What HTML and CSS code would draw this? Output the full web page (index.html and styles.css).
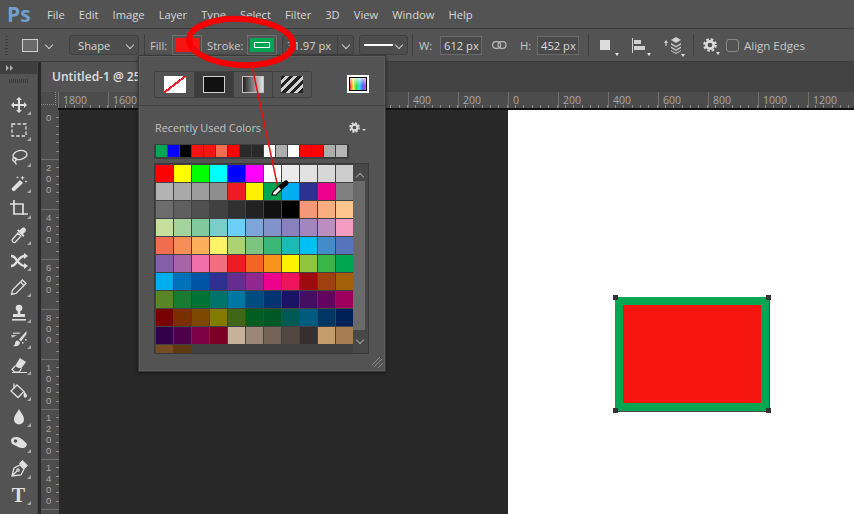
FILE: index.html
```html
<!DOCTYPE html>
<html lang="en">
<head>
    <meta charset="UTF-8">
    <meta name="viewport" content="width=device-width, initial-scale=1.0">
    <title>Photoshop - Stroke Swatches</title>
    <link rel="stylesheet" href="styles.css">
</head>
<body>

    <svg class="defs" width="0" height="0">
        <symbol id="gear" viewBox="0 0 16 16">
            <circle cx="8" cy="8" r="4.2" fill="none" stroke="currentColor" stroke-width="3"/>
            <circle cx="8" cy="8" r="6.6" fill="none" stroke="currentColor" stroke-width="2.4" stroke-dasharray="3 2.18"/>
        </symbol>
    </svg>

    <!-- Menu bar -->
    <div class="menubar">
        <div class="logo">Ps</div>
        <div class="menu-items">
            <span>File</span><span>Edit</span><span>Image</span><span>Layer</span><span>Type</span><span>Select</span>
            <span>Filter</span><span>3D</span><span>View</span><span>Window</span><span>Help</span>
        </div>
    </div>

    <!-- Options bar -->
    <div class="optionsbar">
        <div class="grip"></div>
        <div class="shape-preset"></div>
        <div class="chev preset-chev"></div>
        <div class="dropdown shape-mode">Shape<span class="chev"></span></div>
        <div class="sep"></div>
        <span class="lbl fill-lbl">Fill:</span>
        <div class="swatch-btn fill-btn"></div>
        <span class="lbl stroke-lbl">Stroke:</span>
        <div class="swatch-btn stroke-btn"><span></span></div>
        <div class="dropdown stroke-width">31.97 px<span class="chev-cell"><span class="chev"></span></span></div>
        <div class="dropdown line-style"><span class="line"></span><span class="chev"></span></div>
        <div class="sep sep-a"></div>
        <span class="lbl w-lbl">W:</span>
        <div class="num-input">612 px</div>
        <svg class="link-icon" width="15" height="8" viewBox="0 0 15 8" fill="none" stroke="#b8b8b8" stroke-width="1.2">
            <rect x="0.6" y="0.6" width="8" height="6.8" rx="3.4"/>
            <rect x="6" y="0.6" width="8" height="6.8" rx="3.4"/>
        </svg>
        <span class="lbl h-lbl">H:</span>
        <div class="num-input">452 px</div>
        <div class="sep sep-b"></div>
        <div class="opt-icon op-square"><span></span></div>
        <div class="opt-icon op-align">
            <svg width="14" height="15" viewBox="0 0 14 15" fill="#d0d0d0"><rect width="1" height="15"/><rect x="2" y="2" width="7" height="4"/><rect x="2" y="8" width="11" height="4"/></svg>
        </div>
        <div class="opt-icon op-layers">
            <svg width="20" height="18" viewBox="0 0 20 18" fill="#d0d0d0">
                <path d="M2 7l2-3 2 3H4.600v3H3.400V7z"/>
                <path d="M14 1l5 3-5 3-5-3z"/>
                <path d="M9 7l5 3 5-3v1.500l-5 3-5-3zM9 10.500l5 3 5-3V12l-5 3-5-3zM9 14l4 2.500h2l4-2.500v1l-5 3-5-3z"/>
            </svg>
        </div>
        <div class="sep sep-c"></div>
        <div class="opt-icon op-gear"><svg width="14" height="14"><use href="#gear"/></svg></div>
        <div class="checkbox"></div>
        <span class="lbl align-lbl">Align Edges</span>
    </div>

    <div class="workspace">

        <!-- Tools panel -->
        <div class="tools">
            <div class="tools-head">
                <svg width="8" height="6" viewBox="0 0 8 6" fill="#b0b0b0"><path d="M0 0l3 3-3 3zM4 0l3 3-3 3z"/></svg>
            </div>
            <div class="tools-grip"></div>
            <div class="tool">
                <svg viewBox="0 0 18 18" fill="#e0e0e0"><path d="M9 1l3 3h-2v4h4V6l3 3-3 3v-2h-4v4h2l-3 3-3-3h2v-4H4v2L1 9l3-3v2h4V4H6z"/></svg>
            </div>
            <div class="tool">
                <svg viewBox="0 0 18 18" fill="none" stroke="#e0e0e0" stroke-width="1.300"><rect x="2" y="2" width="14" height="12" stroke-dasharray="3.400 2"/></svg>
            </div>
            <div class="tool">
                <svg viewBox="0 0 18 18" fill="none" stroke="#e0e0e0" stroke-width="1.300"><ellipse cx="10" cy="7" rx="7" ry="4.500" transform="rotate(-12 10 7)"/><circle cx="4.500" cy="11.500" r="1.800"/><path d="M4.500 13c.5 1.500 1 2.500 2 3.500"/></svg>
            </div>
            <div class="tool">
                <svg viewBox="0 0 18 18" fill="#e0e0e0"><path d="M10 6l3 3-8.500 8c-1 .7-3.500-1.500-2.700-2.800z"/><path d="M12.500 1.500l.6 1.700 1.700.6-1.700.6-.6 1.700-.6-1.700-1.700-.6 1.700-.6zM16 6l.4 1.200 1.200.4-1.200.4-.4 1.200-.4-1.200-1.200-.4 1.200-.4zM7.500 2l.4 1 1 .4-1 .4-.4 1-.4-1-1-.4 1-.4z"/></svg>
            </div>
            <div class="tool">
                <svg viewBox="0 0 18 18" fill="none" stroke="#e0e0e0" stroke-width="1.700"><path d="M0 4h13v11M4 0v14h14"/></svg>
            </div>
            <div class="tool">
                <svg viewBox="0 0 18 18"><path d="M8 7l3 3-6 6.500c-1 .8-3.500-1.500-2.800-2.800z" fill="none" stroke="#e0e0e0" stroke-width="1.300"/><path d="M7 4.500l6.500 6.500 1-1.500-1.500-1.500 2.500-2.500c1.500-2.500-1.500-5-3.500-3.500L9.500 4.500 8.500 3.300z" fill="#e0e0e0"/></svg>
            </div>
            <div class="tool">
                <svg viewBox="0 0 18 18" fill="none" stroke="#e0e0e0" stroke-width="2.400"><path d="M1 4c4 0 4 2 6 4.500S11 14 15 14M1 14c4 0 4-2 6-4.500S11 4 15 4"/><path d="M14 1l4 3-4 3zM14 11l4 3-4 3z" fill="#e0e0e0" stroke="none"/></svg>
            </div>
            <div class="tool">
                <svg viewBox="0 0 18 18" fill="none" stroke="#e0e0e0" stroke-width="1.300"><path d="M12.500 2l3.500 3.500L6 15.500l-4.500 1 1-4.500zM10.500 4l3.500 3.500"/></svg>
            </div>
            <div class="tool">
                <svg viewBox="0 0 18 18" fill="#e0e0e0"><circle cx="9" cy="4" r="3.300"/><rect x="7.700" y="6" width="2.600" height="4"/><path d="M3 10h12v3H3z"/><rect x="2" y="15" width="14" height="1.600"/></svg>
            </div>
            <div class="tool">
                <svg viewBox="0 0 18 18" fill="#e0e0e0"><path d="M16.500 1L9 9.500l2 2 5.500-7.500z"/><path d="M8 10.500l2 2c0 3-3.500 4.500-7 3.500 2-.8 2-2 2.200-3.500.3-1.500 1.600-2.200 2.800-2z"/><path d="M1 5h6L2 8zM3 2.500h8l-2 1.500H3z" opacity=".75"/><rect x="12" y="12" width="1.500" height="1.500"/><rect x="15" y="9" width="1.500" height="1.500"/></svg>
            </div>
            <div class="tool">
                <svg viewBox="0 0 18 18"><path d="M10 2l6 4-4.500 6-3 .1L5 10z" fill="#e0e0e0"/><path d="M5 10l-3 3.500 2.500 2.500h5l2-4" fill="none" stroke="#e0e0e0" stroke-width="1.200"/><rect x="2" y="16" width="15" height="1" fill="#e0e0e0"/></svg>
            </div>
            <div class="tool">
                <svg viewBox="0 0 18 18"><path d="M7 3l7 6.500-6 6L1 9z" fill="none" stroke="#e0e0e0" stroke-width="1.300"/><path d="M4 1.500v5" stroke="#e0e0e0" stroke-width="1.300"/><path d="M14 9.500c2 1.500 3 3 3 4.500a1.700 1.700 0 0 1-3.400 0c0-1 .3-2 .4-4.500z" fill="#e0e0e0"/></svg>
            </div>
            <div class="tool">
                <svg viewBox="0 0 18 18" fill="#e0e0e0"><path d="M9 1c2 4 5 6.500 5 10.500a5 5 0 0 1-10 0C4 7.500 7 5 9 1z"/></svg>
            </div>
            <div class="tool">
                <svg viewBox="0 0 18 18"><path d="M1 6c0-2 3-3.500 6-3 4 .6 6 3 10 7-1 3.500-3 4.500-5.500 4C8 13.500 7 12 4 11 2 10.500 1 8.500 1 6z" fill="#e0e0e0"/><circle cx="5.500" cy="7" r="1.800" fill="#535353"/></svg>
            </div>
            <div class="tool">
                <svg viewBox="0 0 18 18" fill="none" stroke="#e0e0e0" stroke-width="1.300"><path d="M2 16l2-8 6-3 4 4-3 6zM2 16l5-5"/><circle cx="8" cy="10" r="1.200"/><path d="M10 3.500L12.500 1 17 5.500 14.500 8z" fill="#e0e0e0"/></svg>
            </div>
            <div class="tool tool-text"><span>T</span></div>
            <div class="tool">
                <svg viewBox="0 0 18 18" fill="#e0e0e0"><path d="M6 2l9 7-4 1 3 6-2 1-3-6-3 3z"/></svg>
            </div>
        </div>

        <div class="document-area">
            <div class="tabs">
                <div class="tab">Untitled-1 @ 25% (Rectangle 1, RGB/8) *</div>
            </div>

            <!-- Horizontal ruler -->
            <div class="h-ruler">
                <div class="ruler-corner"></div>
                <div class="h-marks">
                    <span>1800</span><span>1600</span><span>1400</span><span>1200</span><span>1000</span><span>800</span><span>600</span><span>400</span>
                    <span>200</span><span>0</span><span>200</span><span>400</span><span>600</span><span>800</span><span>1000</span><span>1200</span>
                </div>
            </div>

            <div class="canvas-row">
                <!-- Vertical ruler -->
                <div class="v-ruler">
                    <span>0</span><span>2<br>0<br>0</span><span>4<br>0<br>0</span><span>6<br>0<br>0</span>
                    <span>8<br>0<br>0</span><span>1<br>0<br>0<br>0</span><span>1<br>2<br>0<br>0</span><span>1<br>4<br>0<br>0</span>
                </div>
                <div class="pasteboard">
                    <div class="artboard">
                        <div class="rect-shape">
                            <i class="handle tl"></i><i class="handle tr"></i><i class="handle bl"></i><i class="handle br"></i>
                        </div>
                    </div>
                </div>
            </div>
        </div>
    </div>

    <!-- Stroke swatches popup -->
    <div class="popup">
        <div class="popup-top">
            <div class="type-group">
                <div class="type-btn"><span class="ico ico-none"></span></div>
                <div class="type-btn active"><span class="ico ico-solid"></span></div>
                <div class="type-btn"><span class="ico ico-gradient"></span></div>
                <div class="type-btn"><span class="ico ico-pattern"></span></div>
            </div>
            <div class="picker"><span></span></div>
        </div>
        <div class="popup-body">
            <div class="recent-head">
                <span>Recently Used Colors</span>
                <svg class="recent-gear" width="11" height="11"><use href="#gear"/></svg>
                <i class="mini-tri"></i>
            </div>
            <div class="recent-row">
                <i style="background:#00a651"></i><i style="background:#0000ff"></i><i style="background:#000000"></i><i style="background:#f5140f"></i>
                <i style="background:#f5140f"></i><i style="background:#f26c4f"></i><i style="background:#ff0000"></i><i style="background:#2a2a2a"></i>
                <i style="background:#2a2a2a"></i><i style="background:#ffffff"></i><i style="background:#adadad"></i><i style="background:#ffffff"></i>
                <i style="background:#ff0000"></i><i style="background:#ff0000"></i><i style="background:#adadad"></i><i style="background:#b5b5b5"></i>
            </div>
            <div class="swatch-box">
                <div class="swatches">
                    <i style="background:#ff0000"></i><i style="background:#ffff00"></i><i style="background:#00ff00"></i><i style="background:#00ffff"></i><i style="background:#0000ff"></i><i style="background:#ff00ff"></i><i style="background:#ffffff"></i><i style="background:#ebebeb"></i><i style="background:#e1e1e1"></i><i style="background:#d7d7d7"></i><i style="background:#cccccc"></i>
                    <i style="background:#b3b3b3"></i><i style="background:#a9a9a9"></i><i style="background:#9c9c9c"></i><i style="background:#8e8e8e"></i><i style="background:#ed1c24"></i><i style="background:#fff200"></i><i style="background:#00a651"></i><i style="background:#00aeef"></i><i style="background:#2e3192"></i><i style="background:#ec008c"></i><i style="background:#808080"></i>
                    <i style="background:#6d6d6d"></i><i style="background:#5f5f5f"></i><i style="background:#505050"></i><i style="background:#414141"></i><i style="background:#303030"></i><i style="background:#222222"></i><i style="background:#111111"></i><i style="background:#000000"></i><i style="background:#f7977a"></i><i style="background:#fbad82"></i><i style="background:#fdc68c"></i>
                    <i style="background:#c6df9c"></i><i style="background:#a4d49d"></i><i style="background:#81ca9d"></i><i style="background:#7bcdc9"></i><i style="background:#6ccff7"></i><i style="background:#7ca6d8"></i><i style="background:#8293ca"></i><i style="background:#8881be"></i><i style="background:#a286bd"></i><i style="background:#bc8dbf"></i><i style="background:#f49bc1"></i>
                    <i style="background:#f26c4f"></i><i style="background:#f68e55"></i><i style="background:#fbaf5a"></i><i style="background:#fff467"></i><i style="background:#acd372"></i><i style="background:#7cc47f"></i><i style="background:#3bb878"></i><i style="background:#1abbb4"></i><i style="background:#00bff3"></i><i style="background:#438cca"></i><i style="background:#5574b9"></i>
                    <i style="background:#8560a8"></i><i style="background:#a864a8"></i><i style="background:#f06eaa"></i><i style="background:#f26d7d"></i><i style="background:#ed1c24"></i><i style="background:#f26522"></i><i style="background:#f7941d"></i><i style="background:#fff200"></i><i style="background:#8fc63d"></i><i style="background:#39b54a"></i><i style="background:#00a651"></i>
                    <i style="background:#00aeef"></i><i style="background:#0072bc"></i><i style="background:#0054a6"></i><i style="background:#2e3192"></i><i style="background:#662d91"></i><i style="background:#92278f"></i><i style="background:#ec008c"></i><i style="background:#ed145b"></i><i style="background:#9e0b0f"></i><i style="background:#a0410d"></i><i style="background:#a36209"></i>
                    <i style="background:#598527"></i><i style="background:#197b30"></i><i style="background:#007236"></i><i style="background:#00746b"></i><i style="background:#0076a3"></i><i style="background:#004b80"></i><i style="background:#003471"></i><i style="background:#1b1464"></i><i style="background:#440e62"></i><i style="background:#630460"></i><i style="background:#9e005d"></i>
                    <i style="background:#790000"></i><i style="background:#7b2e00"></i><i style="background:#7d4900"></i><i style="background:#827b00"></i><i style="background:#406618"></i><i style="background:#005e20"></i><i style="background:#005826"></i><i style="background:#005952"></i><i style="background:#005b7f"></i><i style="background:#003663"></i><i style="background:#002157"></i>
                    <i style="background:#32004b"></i><i style="background:#4b0049"></i><i style="background:#7b0046"></i><i style="background:#7a0026"></i><i style="background:#c7b299"></i><i style="background:#998675"></i><i style="background:#736357"></i><i style="background:#534741"></i><i style="background:#362f2d"></i><i style="background:#c69c6d"></i><i style="background:#a67c52"></i>
                    <i style="background:#754c24"></i><i style="background:#603913"></i>
                </div>
                <div class="scrollbar">
                    <div class="scroll-arrow up"></div>
                    <div class="scroll-thumb"></div>
                    <div class="scroll-arrow down"></div>
                </div>
            </div>
        </div>
        <svg class="resize-grip" width="11" height="11" viewBox="0 0 11 11" stroke="#8a8a8a" stroke-width="1">
            <path d="M0 8l8-8M2 10l8-8M6 11l5-5"/>
        </svg>
    </div>

    <!-- Red annotation over the screenshot -->
    <svg class="annotation" width="854" height="514" viewBox="0 0 854 514">
        <ellipse cx="241" cy="42" rx="52" ry="23" fill="none" stroke="#f80000" stroke-width="6" transform="rotate(3 241 42)"/>
        <line x1="252" y1="66" x2="278" y2="188" stroke="#e81010" stroke-width="1.500"/>
        <path d="M272 195l1-3 7-7 3 3-7 7z" fill="#fff" stroke="#000" stroke-width="1.200"/>
        <line x1="281.500" y1="186.500" x2="286" y2="183" stroke="#000" stroke-width="5" stroke-linecap="round"/>
    </svg>

</body>
</html>
```

FILE: styles.css
```css
* {
    box-sizing: border-box;
}

html, body {
    margin: 0;
    padding: 0;
}

body {
    position: relative;
    width: 854px;
    height: 514px;
    overflow: hidden;
    background: #282828;
    color: #d4d4d4;
    font-family: "Open Sans", Arial, sans-serif;
    font-size: 11.2px;
}

.defs {
    position: absolute;
}

/* menu bar */
.menubar {
    display: flex;
    align-items: center;
    height: 29px;
    background: #535353;
    border-bottom: 1px solid #3a3a3a;
}

.logo {
    width: 47px;
    padding-left: 7px;
    color: #6f9fca;
    font-family: "Open Sans", sans-serif;
    font-size: 21px;
    font-weight: 700;
    line-height: 28px;
}

.menu-items {
    display: flex;
    gap: 14px;
    color: #d6d6d6;
}

/* options bar */
.optionsbar {
    display: flex;
    align-items: center;
    height: 33px;
    background: #535353;
    border-bottom: 1px solid #3c3c3c;
}

.grip {
    width: 3px;
    height: 19px;
    margin-left: 5px;
    background: repeating-linear-gradient(#3a3a3a 0 1px, transparent 1px 3px);
}

.shape-preset {
    width: 16px;
    height: 13px;
    margin-left: 14px;
    background: #6a6a6a;
    border: 1px solid #d0d0d0;
}

.chev {
    display: inline-block;
    width: 6px;
    height: 6px;
    border-right: 1px solid #c8c8c8;
    border-bottom: 1px solid #c8c8c8;
    transform: rotate(45deg);
}

.preset-chev {
    margin-left: 8px;
}

.dropdown {
    display: flex;
    align-items: center;
    height: 20px;
    border: 1px solid #404040;
    border-radius: 3px;
    background: #4d4d4d;
}

.shape-mode {
    justify-content: space-between;
    width: 70px;
    margin-left: 17px;
    padding: 0 5px 0 8px;
}

.sep {
    width: 1px;
    height: 22px;
    margin-left: 5px;
    background: #3e3e3e;
}

.lbl {
    color: #c8c8c8;
}

.fill-lbl {
    width: 17px;
    margin-left: 5px;
    white-space: nowrap;
}

.swatch-btn {
    display: flex;
    align-items: center;
    justify-content: center;
    width: 30px;
    height: 20px;
    border: 1px solid #6e6e6e;
    padding: 2px;
    background-clip: content-box;
}

.fill-btn {
    margin-left: 5px;
    background-color: #f5140f;
}

.stroke-lbl {
    width: 37px;
    margin-left: 5px;
    white-space: nowrap;
}

.stroke-btn {
    margin-left: 3px;
    background-color: #00a651;
}

.stroke-btn span {
    display: block;
    width: 16px;
    height: 6px;
    border: 1px solid #fff;
    background: #00a651;
}

.stroke-width {
    width: 72px;
    margin-left: 5px;
    padding-left: 4px;
    justify-content: space-between;
}

.chev-cell {
    display: flex;
    align-items: center;
    justify-content: center;
    width: 16px;
    height: 18px;
    border-left: 1px solid #404040;
}

.line-style {
    justify-content: space-between;
    width: 49px;
    margin-left: 5px;
    padding: 0 5px 0 4px;
}

.line {
    width: 29px;
    height: 2px;
    background: #fff;
}

.sep-a {
    margin-left: 4px;
}

.w-lbl {
    width: 14px;
    margin-left: 6px;
    white-space: nowrap;
}

.num-input {
    width: 42px;
    height: 19px;
    margin-left: 7px;
    padding-left: 3px;
    border: 1px solid #6a6a6a;
    background: #4a4a4a;
    color: #dcdcdc;
    line-height: 17px;
}

.link-icon {
    margin-left: 10px;
}

.h-lbl {
    width: 10px;
    margin-left: 13px;
    white-space: nowrap;
}

.sep-b {
    margin-left: 9px;
}

.opt-icon {
    position: relative;
    display: flex;
    align-items: center;
}

.opt-icon::after {
    content: "";
    position: absolute;
    right: -3px;
    bottom: -3px;
    border: 2px solid transparent;
    border-top: 3px solid #e0e0e0;
    border-bottom: 0;
}

.op-square {
    width: 16px;
    height: 16px;
    margin-left: 11px;
}

.op-square span {
    width: 10px;
    height: 10px;
    background: #dcdcdc;
}

.op-align {
    width: 16px;
    margin-left: 16px;
}

.op-layers {
    width: 20px;
    margin-left: 14px;
}

.sep-c {
    margin-left: 11px;
}

.op-gear {
    width: 14px;
    margin-left: 9px;
    color: #dcdcdc;
}

.checkbox {
    width: 13px;
    height: 13px;
    margin-left: 9px;
    border: 1px solid #8a8a8a;
    border-radius: 3px;
}

.align-lbl {
    margin-left: 5px;
    font-size: 11.5px;
}

/* workspace */
.workspace {
    display: flex;
    height: 452px;
    overflow: hidden;
}

.tools {
    flex: none;
    width: 38px;
    background: #535353;
    border-right: 1px solid #474747;
}

.tools-head {
    display: flex;
    align-items: center;
    height: 12px;
    padding-left: 6px;
    background: #3e3e3e;
}

.tools-grip {
    width: 20px;
    height: 4px;
    margin: 5px auto 9px;
    background: repeating-linear-gradient(90deg, #3a3a3a 0 1px, transparent 1px 2px);
}

.tool {
    position: relative;
    display: flex;
    justify-content: center;
    align-items: center;
    height: 26px;
}

.tool svg {
    width: 18px;
    height: 18px;
}

.tool::after {
    content: "";
    position: absolute;
    right: 6px;
    bottom: 3px;
    border-left: 4px solid transparent;
    border-bottom: 4px solid #a8a8a8;
}

.tool-text span {
    color: #e0e0e0;
    font-family: "Liberation Serif", serif;
    font-size: 20px;
    font-weight: 700;
    line-height: 26px;
}

.document-area {
    flex: 1;
    margin-left: 3px;
    display: flex;
    flex-direction: column;
    min-width: 0;
}

.tabs {
    height: 30px;
    background: #424242;
    overflow: hidden;
}

.tab {
    width: 300px;
    height: 30px;
    padding-left: 11px;
    background: #535353;
    color: #e0e0e0;
    font-weight: 600;
    font-size: 12px;
    line-height: 29px;
    white-space: nowrap;
}

.h-ruler {
    display: flex;
    height: 18px;
    background: #4c4c4c;
}

.ruler-corner {
    flex: none;
    width: 15px;
    height: 13px;
    margin-right: 2px;
    border-right: 1px dotted #8a8a8a;
    border-bottom: 1px dotted #8a8a8a;
}

.h-marks {
    display: flex;
    flex: none;
    border-bottom: 2px solid #111;
    background: repeating-linear-gradient(90deg, transparent 0 7.33px, #8a8a8a 7.33px 8.33px) left bottom / 100% 3px no-repeat;
}

.h-marks span {
    flex: none;
    width: 50px;
    padding-left: 4px;
    border-left: 1px solid #6f6f6f;
    color: #a8a8a8;
    font-size: 10.5px;
    line-height: 16px;
}

.canvas-row {
    display: flex;
    height: 404px;
}

.v-ruler {
    flex: none;
    display: flex;
    flex-direction: column;
    width: 18px;
    background: #4c4c4c repeating-linear-gradient(transparent 0 7.33px, #8a8a8a 7.33px 8.33px) right top / 3px 100% no-repeat;
}

.v-ruler span {
    flex: none;
    height: 50px;
    padding: 2px 0 0 5px;
    border-bottom: 1px solid #6f6f6f;
    color: #a8a8a8;
    font-family: "Liberation Sans", Arial, sans-serif;
    font-size: 9.5px;
    line-height: 11px;
}

.pasteboard {
    flex: 1;
    padding-left: 449px;
    background: #282828;
}

.artboard {
    position: relative;
    height: 100%;
    background: #fff;
}

.rect-shape {
    position: absolute;
    left: 107px;
    top: 187px;
    width: 154px;
    height: 114px;
    background: #f5140f;
    border: 8px solid #00a651;
    box-shadow: 1px 1px 0 #4a4a4a;
}

.handle {
    position: absolute;
    width: 5px;
    height: 5px;
    background: #333;
}

.tl { left: -10px; top: -10px; }
.tr { right: -10px; top: -10px; }
.bl { left: -10px; bottom: -10px; }
.br { right: -10px; bottom: -10px; }

/* stroke popup */
.popup {
    position: absolute;
    left: 138px;
    top: 55px;
    width: 248px;
    height: 317px;
    background: #535353;
    border: 1px solid #3a3a3a;
    box-shadow: 0 1px 3px rgba(0, 0, 0, 0.5), inset 0 0 0 1px #5c5c5c;
}

.popup-top {
    display: flex;
    justify-content: space-between;
    align-items: center;
    height: 50px;
    padding: 7px 16px 0 15px;
    border-bottom: 1px solid #414141;
}

.type-group {
    display: flex;
    border: 1px solid #404040;
    border-radius: 2px;
}

.type-btn {
    display: flex;
    align-items: center;
    justify-content: center;
    width: 39px;
    height: 25px;
    border-left: 1px solid #404040;
}

.type-btn:first-child {
    border-left: 0;
}

.type-btn.active {
    background: #3c3c3c;
}

.ico {
    display: block;
    width: 22px;
    height: 17px;
}

.ico-none {
    background: linear-gradient(to top left, #fff 47%, #e81c24 47% 55%, #fff 55%);
}

.ico-solid {
    background: #111;
    border: 1px solid #d0d0d0;
}

.ico-gradient {
    background: linear-gradient(90deg, #222, #e4e4e4);
    border: 1px solid #c0c0c0;
}

.ico-pattern {
    background: repeating-linear-gradient(135deg, #222 0 3px, #d0d0d0 3px 6px);
}

.picker {
    width: 22px;
    height: 18px;
    padding: 2px;
    background: #fff;
}

.picker span {
    display: block;
    height: 100%;
    border: 1px solid #000;
    background:
        linear-gradient(rgba(255, 255, 255, 0.7), rgba(255, 255, 255, 0) 60%),
        linear-gradient(90deg, #ff3030, #f6f04a, #38e05a, #38d8f0, #5060f0, #f040d0);
}

.popup-body {
    padding: 13px 0 0 15px;
}

.recent-head {
    display: flex;
    align-items: center;
    height: 16px;
    padding-left: 1px;
    color: #c4c4c4;
    font-size: 10.8px;
}

.recent-gear {
    margin-left: 88px;
    color: #dcdcdc;
}

.mini-tri {
    margin: 5px 0 0 2px;
    border: 2px solid transparent;
    border-top: 2px solid #dcdcdc;
    border-bottom: 0;
}

.recent-row {
    display: flex;
    width: 195px;
    height: 15px;
    margin-top: 9px;
    padding: 1px 0 0 2px;
    background: #3e3e3e;
}

.recent-row i {
    display: block;
    width: 11px;
    height: 12px;
    margin-right: 1px;
}

.swatch-box {
    display: flex;
    width: 215px;
    height: 191px;
    margin-top: 4px;
    border: 1px solid #3a3a3a;
    background: #484848;
}

.swatches {
    display: flex;
    flex-wrap: wrap;
    align-content: flex-start;
    gap: 1px;
    width: 198px;
    height: 189px;
    overflow: hidden;
    padding: 1px 0 0 1px;
    background: #414141;
}

.swatches i {
    display: block;
    width: 17px;
    height: 17px;
}

.scrollbar {
    flex: 1;
    display: flex;
    flex-direction: column;
    background: #484848;
}

.scroll-arrow {
    flex: none;
    width: 6px;
    height: 6px;
    margin-left: 4px;
    border-left: 1px solid #a0a0a0;
    border-top: 1px solid #a0a0a0;
    transform: rotate(45deg);
}

.scroll-arrow.up {
    margin-top: 10px;
}

.scroll-arrow.down {
    margin-top: 7px;
    transform: rotate(225deg);
}

.scroll-thumb {
    flex: none;
    width: 12px;
    height: 149px;
    margin-top: 1px;
    background: #6a6a6a;
}

.resize-grip {
    position: absolute;
    right: 2px;
    bottom: 3px;
}

.annotation {
    position: absolute;
    left: 0;
    top: 0;
    pointer-events: none;
}
```
